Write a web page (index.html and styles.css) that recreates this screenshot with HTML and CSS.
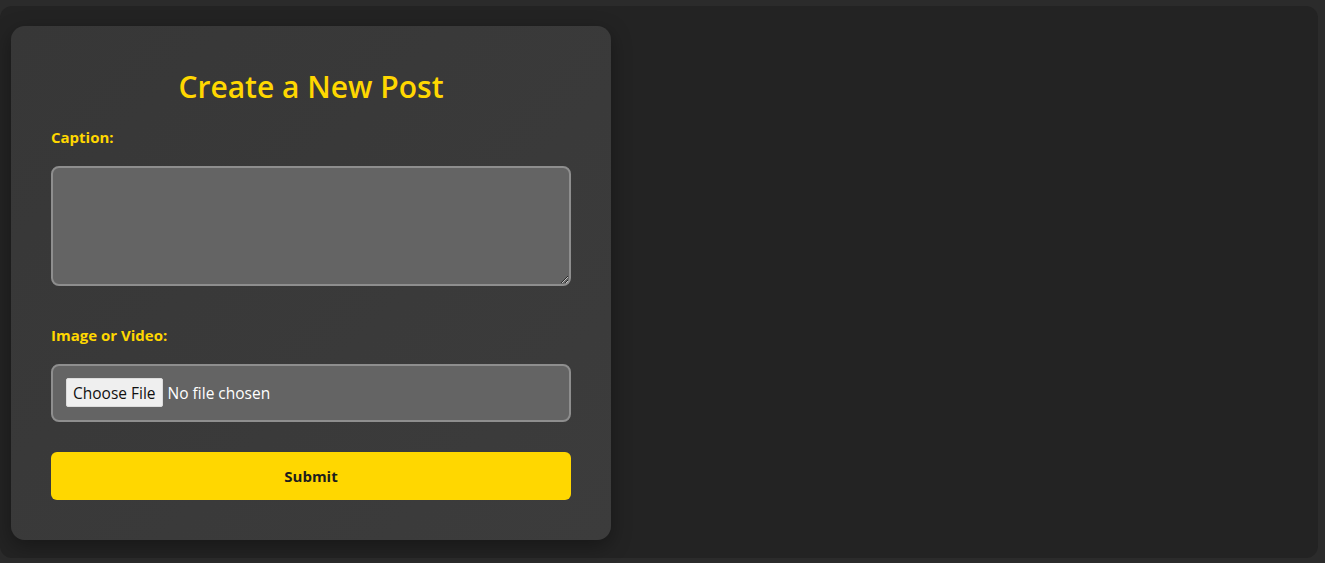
FILE: index.html
```html
<!DOCTYPE html>
<html lang="en">
<head>
<meta charset="utf-8">
<title>Create a New Post</title>
<link rel="stylesheet" href="styles.css">
</head>
<body>
<main class="app">
  <section class="card">
    <h2 class="title">Create a New Post</h2>
    <form class="post-form">
      <div class="group">
        <label class="label" for="caption">Caption:</label>
        <textarea id="caption" class="textarea"></textarea>
      </div>
      <div class="group">
        <label class="label" for="media">Image or Video:</label>
        <input id="media" class="file" type="file">
      </div>
      <button type="button" class="submit">Submit</button>
    </form>
  </section>
</main>
</body>
</html>
```
FILE: styles.css
```css
* { box-sizing: border-box; }
html, body { height: 100%; }
body {
  margin: 0;
  background: #2b2b2b;
  font-family: "Open Sans", "Noto Sans", "Liberation Sans", sans-serif;
  padding: 6px 7px 5px 0;
}
.app {
  height: 100%;
  background: #232323;
  border-radius: 12px;
  padding: 20px 11px;
  display: flex;
  align-items: flex-start;
}
.card {
  width: 600px;
  padding: 40px;
  border-radius: 14px;
  background: linear-gradient(135deg, #373737, #3c3c3c);
  box-shadow: 0 6px 20px rgba(0,0,0,0.35);
}
.title {
  margin: 0;
  text-align: center;
  color: #ffd700;
  font-size: 30px;
  line-height: 42px;
  font-weight: 600;
}
.post-form {
  display: flex;
  flex-direction: column;
}
.group {
  display: flex;
  flex-direction: column;
}
.label {
  color: #ffd700;
  font-weight: 700;
  font-size: 15px;
  line-height: 20px;
  margin-top: 19px;
  margin-bottom: 19px;
}
.group + .group .label { margin-top: 39px; }
.textarea {
  height: 120px;
  width: 100%;
  background: #646464;
  border: 2px solid #8e8e8e;
  border-radius: 8px;
  color: #fff;
  font-family: inherit;
  font-size: 15px;
  padding: 10px;
}
.file {
  width: 100%;
  height: 58px;
  background: #646464;
  border: 2px solid #8e8e8e;
  border-radius: 8px;
  color: #fff;
  font-family: inherit;
  font-size: 15.5px;
  padding: 12px 13px;
}
.file::file-selector-button {
  font-family: inherit;
  font-size: 15.5px;
  height: 29px;
  padding: 0 6px;
  margin-right: 5px;
  background: #efefef;
  color: #111;
  border: 1px solid #dcdcdc;
  border-radius: 2px;
}
.submit {
  margin-top: 30px;
  height: 48px;
  width: 100%;
  background: #ffd700;
  border: none;
  border-radius: 6px;
  color: #1d1d1d;
  font-family: inherit;
  font-weight: 700;
  font-size: 15px;
}
```
